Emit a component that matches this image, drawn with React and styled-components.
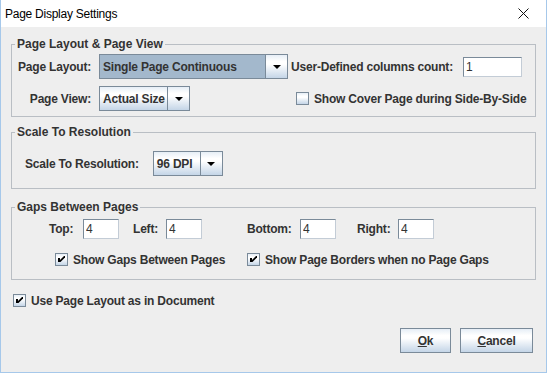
import styled, { createGlobalStyle } from "styled-components";

const FONT = `"Liberation Sans", Arial, sans-serif`;
const EDGE = "#7a8a99";
const GLOSS = "linear-gradient(to bottom, #e6eef6 0%, #ffffff 28%, #ffffff 40%, #c4d5e7 100%)";

const GlobalStyle = createGlobalStyle`
  html, body { margin: 0; padding: 0; }
  body { width: 547px; height: 373px; overflow: hidden; background: #eeeeee; }
`;

function App() {
  return (
    <>
      <GlobalStyle />
      <Window>
        <TitleBar>
          <Title>Page Display Settings</Title>
          <Close>
            <svg width="11" height="11" viewBox="0 0 11 11">
              <path d="M0.5 0.5 L10.5 10.5 M10.5 0.5 L0.5 10.5" stroke="#111" strokeWidth="1" fill="none" />
            </svg>
          </Close>
        </TitleBar>

        <Body>
          <Group $top={0}>
            <Legend>Page Layout &amp; Page View</Legend>
            <LayoutGrid>
              <Label $right>Page Layout:</Label>
              <Combo $width={189} $selected value="Single Page Continuous" />
              <Inline>
                <Label $left={3}>User-Defined columns count:</Label>
                <Field $width={59} defaultValue="1" />
              </Inline>

              <Label $right>Page View:</Label>
              <Combo $width={91} value="Actual Size" />
              <Check $left={8} label="Show Cover Page during Side-By-Side" />
            </LayoutGrid>
          </Group>

          <Group $top={8}>
            <Legend>Scale To Resolution</Legend>
            <ScaleRow>
              <Label>Scale To Resolution:</Label>
              <Combo $width={70} value="96 DPI" />
            </ScaleRow>
          </Group>

          <Group $top={11}>
            <Legend>Gaps Between Pages</Legend>
            <GapsBody>
              <GapRow>
                <Pair $left={37} $width={70}>
                  <Label>Top:</Label>
                  <Field $width={36} defaultValue="4" />
                </Pair>
                <Pair $left={14} $width={69}>
                  <Label>Left:</Label>
                  <Field $width={36} defaultValue="4" />
                </Pair>
                <Pair $left={45} $width={89}>
                  <Label>Bottom:</Label>
                  <Field $width={36} defaultValue="4" />
                </Pair>
                <Pair $left={21} $width={77}>
                  <Label>Right:</Label>
                  <Field $width={36} defaultValue="4" />
                </Pair>
              </GapRow>
              <CheckRow>
                <Check $left={43} $width={192} checked label="Show Gaps Between Pages" />
                <Check checked label="Show Page Borders when no Page Gaps" />
              </CheckRow>
            </GapsBody>
          </Group>

          <LooseCheck>
            <Check $left={2} checked label="Use Page Layout as in Document" />
          </LooseCheck>

          <Buttons>
            <Button $width={51}><u>O</u>k</Button>
            <Button $width={73}><u>C</u>ancel</Button>
          </Buttons>
        </Body>
      </Window>
    </>
  );
}

function Combo({ value, $width, $selected }) {
  return (
    <ComboBox $width={$width}>
      <ComboValue $selected={$selected}>{value}</ComboValue>
      <ComboArrow>
        <svg width="8" height="4" viewBox="0 0 8 4">
          <polygon points="0,0 8,0 4,4" fill="#000" />
        </svg>
      </ComboArrow>
    </ComboBox>
  );
}

function Check({ label, checked, $left, $width }) {
  return (
    <CheckItem $left={$left} $width={$width}>
      <Box>
        {checked && (
          <svg width="11" height="11" viewBox="1 1 11 11">
            <rect x="3" y="5" width="2" height="4" fill="#000" />
            <polygon points="5,7 9,3 10,3 10,4.5 5.5,9 5,9" fill="#000" />
          </svg>
        )}
      </Box>
      <Label>{label}</Label>
    </CheckItem>
  );
}

const Window = styled.div`
  width: 547px;
  height: 373px;
  box-sizing: border-box;
  border: 1px solid #a6c8ea;
  border-top: none;
  display: flex;
  flex-direction: column;
  background: #eeeeee;
  font-family: ${FONT};
  color: #333333;
`;

const TitleBar = styled.div`
  height: 27px;
  flex-shrink: 0;
  background: #ffffff;
  display: flex;
  align-items: center;
  justify-content: space-between;
  padding-left: 4px;
`;

const Title = styled.span`
  font-size: 12px;
  letter-spacing: -0.25px;
  color: #000000;
`;

const Close = styled.div`
  width: 46px;
  height: 27px;
  display: flex;
  align-items: center;
  justify-content: center;
`;

const Body = styled.div`
  display: flex;
  flex-direction: column;
  padding: 10px 10px 0 10px;
`;

const Group = styled.fieldset`
  margin: ${p => p.$top}px 0 0 0;
  padding: 0;
  min-width: 0;
  border: 1px solid #b9bec4;
`;

const Legend = styled.legend`
  margin-left: 3px;
  padding: 0 2px;
  font-size: 12px;
  line-height: 14px;
  font-weight: bold;
  color: #333333;
`;

const Label = styled.span`
  font-size: 12px;
  line-height: 14px;
  font-weight: bold;
  letter-spacing: -0.2px;
  color: #333333;
  white-space: nowrap;
  margin-left: ${p => p.$left || 0}px;
  ${p => p.$right && "text-align: right; padding-right: 8px;"}
`;

const LayoutGrid = styled.div`
  display: grid;
  grid-template-columns: 82px 189px 1fr;
  grid-template-rows: 25px 25px;
  row-gap: 7px;
  align-items: center;
  padding: 3px 0 5px 5px;
`;

const Inline = styled.div`
  display: flex;
  align-items: center;
  justify-content: space-between;
  width: 234px;
`;

const ScaleRow = styled.div`
  display: flex;
  align-items: center;
  gap: 14px;
  padding: 12px 0 12px 13px;
`;

const GapsBody = styled.div`
  display: flex;
  flex-direction: column;
  gap: 11px;
  padding: 5px 0 10px 0;
`;

const GapRow = styled.div`
  display: flex;
  align-items: center;
  height: 20px;
`;

const Pair = styled.div`
  display: flex;
  align-items: center;
  justify-content: space-between;
  width: ${p => p.$width}px;
  margin-left: ${p => p.$left}px;
`;

const CheckRow = styled.div`
  display: flex;
  align-items: center;
  height: 19px;
`;

const CheckItem = styled.label`
  display: flex;
  align-items: center;
  gap: 5px;
  margin-left: ${p => p.$left || 0}px;
  ${p => p.$width && `width: ${p.$width}px;`}
`;

const Box = styled.span`
  width: 13px;
  height: 13px;
  box-sizing: border-box;
  border: 1px solid ${EDGE};
  background: ${GLOSS};
  display: inline-flex;
  flex-shrink: 0;
`;

const LooseCheck = styled.div`
  display: flex;
  align-items: center;
  height: 19px;
  margin-top: 11px;
`;

const ComboBox = styled.div`
  display: flex;
  width: ${p => p.$width}px;
  height: 25px;
  box-sizing: border-box;
  border: 1px solid ${EDGE};
`;

const ComboValue = styled.div`
  flex: 1;
  display: flex;
  align-items: center;
  padding-left: 3px;
  font-size: 12px;
  font-weight: bold;
  letter-spacing: -0.2px;
  color: #333333;
  white-space: nowrap;
  overflow: hidden;
  border-right: 1px solid ${EDGE};
  background: ${p => (p.$selected ? "#a3b8cc" : GLOSS)};
`;

const ComboArrow = styled.div`
  width: 21px;
  display: flex;
  align-items: center;
  justify-content: center;
  background: ${GLOSS};
`;

const Field = styled.input`
  width: ${p => p.$width}px;
  height: 20px;
  box-sizing: border-box;
  margin: 0;
  padding: 0 2px;
  border: 1px solid;
  border-color: ${EDGE} #c3ccd6 #c3ccd6 ${EDGE};
  background: #ffffff;
  font-family: ${FONT};
  font-size: 12px;
  color: #333333;
  outline: none;
`;

const Buttons = styled.div`
  display: flex;
  justify-content: flex-end;
  gap: 9px;
  margin-top: 18px;
  margin-right: 3px;
`;

const Button = styled.button`
  width: ${p => p.$width}px;
  height: 25px;
  padding: 0;
  border: 1px solid ${EDGE};
  background: ${GLOSS};
  font-family: ${FONT};
  font-size: 12px;
  font-weight: bold;
  letter-spacing: -0.2px;
  color: #333333;
`;

export default App;
